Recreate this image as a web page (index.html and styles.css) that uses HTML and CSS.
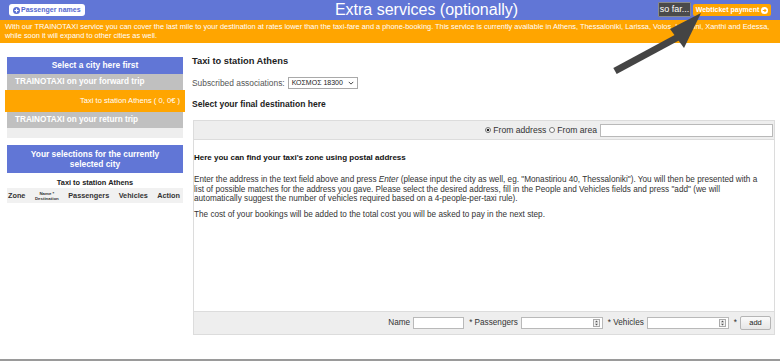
FILE: index.html
```html
<!DOCTYPE html>
<html lang="en">
<head>
<meta charset="utf-8">
<title>Extra services</title>
<link rel="stylesheet" href="styles.css">
</head>
<body>
<header class="topbar">
  <button class="btn-passengers" type="button">
    <svg class="ico" viewBox="0 0 10 10"><circle cx="5" cy="5" r="5" fill="#5a6fd2"/><path d="M5 2.2v5.6M2.2 5h5.6" stroke="#fff" stroke-width="1.7"/></svg>
    Passenger names
  </button>
  <h1 class="title">Extra services (optionally)</h1>
  <div class="top-actions">
    <span class="sofar">so far...</span>
    <button class="btn-pay" type="button">Webticket payment
      <svg class="ico" viewBox="0 0 10 10"><circle cx="5" cy="5" r="5" fill="#fff"/><path d="M2.5 5h4M5 3l2 2-2 2" stroke="#ffa500" stroke-width="1.5" fill="none"/></svg>
    </button>
  </div>
</header>

<p class="banner">With our TRAINOTAXI service you can cover the last mile to your destination at rates lower than the taxi-fare and a phone-booking. This service is currently available in Athens, Thessaloniki, Larissa, Volos, Ioannini, Xanthi and Edessa, while soon it will expand to other cities as well.</p>

<div class="layout">
  <aside class="side">
    <div class="side-head">Select a city here first</div>
    <div class="side-row">TRAINOTAXI on your forward trip</div>
    <div class="side-item">Taxi to station Athens ( 0, 0€ )</div>
    <div class="side-row">TRAINOTAXI on your return trip</div>
    <div class="side-spacer"></div>
    <div class="side-head selections">Your selections for the currently selected city</div>
    <div class="sel-title">Taxi to station Athens</div>
    <div class="sel-cols">
      <span>Zone</span>
      <span class="tiny">Name *<br>Destination</span>
      <span>Passengers</span>
      <span>Vehicles</span>
      <span>Action</span>
    </div>
  </aside>

  <section class="content">
    <h2 class="c-title">Taxi to station Athens</h2>
    <div class="assoc">Subscribed associations:
      <span class="select">ΚΟΣΜΟΣ 18300<svg class="chev" viewBox="0 0 8 5"><path d="M1 1l3 3 3-3" stroke="#333" stroke-width="1.2" fill="none"/></svg></span>
    </div>
    <h3 class="c-sub">Select your final destination here</h3>

    <div class="panel">
      <div class="panel-top">
        <label class="radio"><input type="radio" name="mode" checked>From address</label>
        <label class="radio"><input type="radio" name="mode">From area</label>
        <input class="txt search" type="text">
      </div>
      <div class="panel-body">
        <h4 class="p-head">Here you can find your taxi's zone using postal address</h4>
        <p>Enter the address in the text field above and press <em>Enter</em> (please input the city as well, eg. "Monastiriou 40, Thessaloniki"). You will then be presented with a list of possible matches for the address you gave. Please select the desired address, fill in the People and Vehicles fields and press "add" (we will automatically suggest the number of vehicles required based on a 4-people-per-taxi rule).</p>
        <p>The cost of your bookings will be added to the total cost you will be asked to pay in the next step.</p>
      </div>
      <div class="panel-bottom">
        <span class="lbl">Name</span>
        <input class="txt name" type="text">
        <span class="lbl">* Passengers</span>
        <span class="numbox"><input type="text"><svg class="spin" viewBox="0 0 7 8"><rect x="0.5" y="0.5" width="6" height="7" fill="#f2f2f2" stroke="#aaa"/><path d="M2 3.3h3L3.5 1.6zM2 4.7h3L3.5 6.4z" fill="#555"/></svg></span>
        <span class="lbl">* Vehicles</span>
        <span class="numbox"><input type="text"><svg class="spin" viewBox="0 0 7 8"><rect x="0.5" y="0.5" width="6" height="7" fill="#f2f2f2" stroke="#aaa"/><path d="M2 3.3h3L3.5 1.6zM2 4.7h3L3.5 6.4z" fill="#555"/></svg></span>
        <span class="lbl">*</span>
        <button class="btn-add" type="button">add</button>
      </div>
    </div>
  </section>
</div>

<footer class="foot"></footer>

<svg class="arrow" viewBox="606 8 100 70">
  <line x1="615" y1="71" x2="680" y2="36" stroke="#444" stroke-width="7"/>
  <polygon points="701,13 670,29 684,48" fill="#444"/>
</svg>
</body>
</html>
```

FILE: styles.css
```css
* { box-sizing: border-box; }

body {
  margin: 0;
  width: 780px;
  height: 361px;
  overflow: hidden;
  position: relative;
  background: #fff;
  color: #333;
  font-family: "Liberation Sans", Arial, sans-serif;
}

/* top bar */
.topbar {
  display: flex;
  align-items: center;
  height: 20px;
  padding: 0 9px;
  background: #6176d6;
}
.btn-passengers {
  display: flex;
  align-items: center;
  gap: 1px;
  width: 76px;
  height: 12px;
  padding: 0 0 0 4px;
  border: 0;
  border-radius: 3px;
  background: #fff;
  color: #5468cf;
  font: bold 7px/12px "Liberation Sans", Arial, sans-serif;
  white-space: nowrap;
}
.ico { width: 7px; height: 7px; flex: none; }
.title {
  flex: 1;
  margin: 0;
  padding-left: 110px;
  text-align: center;
  color: #fff;
  font: normal 16px/20px "Liberation Sans", Arial, sans-serif;
}
.top-actions {
  display: flex;
  align-items: center;
  gap: 2px;
}
.sofar {
  width: 33px;
  height: 15px;
  margin-top: -1px;
  border: 1px solid #8a8a8a;
  border-radius: 1px;
  background: #4a4a4a;
  color: #fff;
  font: 9px/13px "Liberation Sans", Arial, sans-serif;
  text-align: center;
}
.btn-pay {
  display: flex;
  align-items: center;
  justify-content: center;
  gap: 2px;
  width: 78px;
  height: 12px;
  padding: 0;
  border: 0;
  border-radius: 2px;
  background: #ffa500;
  color: #fff;
  font: bold 7px/12px "Liberation Sans", Arial, sans-serif;
  white-space: nowrap;
}

/* banner */
.banner {
  margin: 0;
  height: 23px;
  padding: 2px 4px 0 5px;
  background: #ffa500;
  color: #fff;
  font: 7.4px/9px "Liberation Sans", Arial, sans-serif;
}

/* layout */
.layout {
  display: flex;
  align-items: flex-start;
  gap: 9px;
  padding: 14px 0 0 7px;
}
.side { width: 176px; flex: none; }
.content { width: 583px; flex: none; }

/* side column */
.side-head {
  height: 17px;
  background: #6176d6;
  color: #fff;
  text-align: center;
  font: bold 8.4px/17px "Liberation Sans", Arial, sans-serif;
}
.side-row {
  height: 16px;
  padding-left: 8px;
  background: #c0c0c0;
  color: #fff;
  font: bold 8.2px/16px "Liberation Sans", Arial, sans-serif;
}
.side-item {
  height: 22px;
  margin: 0 -2px;
  padding-right: 5px;
  background: #ffa500;
  color: #fff;
  text-align: right;
  font: 7.6px/22px "Liberation Sans", Arial, sans-serif;
}
.side-spacer { height: 10px; background: #eeeeee; }
.side-head.selections {
  height: 28px;
  margin-top: 7px;
  padding: 4px 10px 0;
  line-height: 10px;
}
.sel-title {
  margin-top: 5px;
  color: #222;
  text-align: center;
  font: bold 7.4px/10px "Liberation Sans", Arial, sans-serif;
}
.sel-cols {
  display: flex;
  align-items: center;
  justify-content: space-between;
  height: 15px;
  padding: 0 3px 0 1px;
  background: #f1f1f1;
  color: #333;
  font: bold 7.3px/9px "Liberation Sans", Arial, sans-serif;
}
.sel-cols .tiny {
  font-size: 4.4px;
  line-height: 5px;
  text-align: center;
}

/* content */
.c-title {
  margin: -2px 0 0;
  color: #222;
  font: bold 9.3px/12px "Liberation Sans", Arial, sans-serif;
}
.assoc {
  display: flex;
  align-items: center;
  gap: 3px;
  height: 12px;
  margin-top: 10px;
  color: #555;
  font: 8.4px/12px "Liberation Sans", Arial, sans-serif;
}
.select {
  display: flex;
  align-items: center;
  justify-content: space-between;
  width: 70px;
  height: 12px;
  padding: 0 3px;
  border: 1px solid #a9a9a9;
  background: #fff;
  color: #222;
  font: 7px/10px "Liberation Sans", Arial, sans-serif;
}
.chev { width: 6px; height: 4px; }
.c-sub {
  margin: 10px 0 0;
  color: #222;
  font: bold 8.5px/10px "Liberation Sans", Arial, sans-serif;
}

/* panel */
.panel {
  width: 582px;
  margin: 11px 0 0 1px;
  border: 1px solid #dcdcdc;
}
.panel-top {
  display: flex;
  align-items: center;
  justify-content: flex-end;
  gap: 3px;
  height: 19px;
  padding-right: 1px;
  background: #eeeeee;
  border-bottom: 1px solid #dcdcdc;
  font: 8.6px/12px "Liberation Sans", Arial, sans-serif;
  color: #333;
}
.radio { display: flex; align-items: center; gap: 2px; }
.radio input {
  appearance: none;
  width: 6px;
  height: 6px;
  margin: 0;
  border: 1px solid #777;
  border-radius: 50%;
  background: #fff;
}
.radio input:checked {
  background: radial-gradient(circle, #222 0 1.4px, #fff 1.6px);
}
.txt {
  height: 13px;
  border: 1px solid #b9b9b9;
  background: #fff;
  padding: 0;
}
.search { width: 173px; }

.panel-body {
  height: 171px;
  padding: 13px 6px 0 0;
  color: #333;
  font: 8.2px/9.7px "Liberation Sans", Arial, sans-serif;
}
.p-head {
  margin: 0 0 12px;
  color: #111;
  font: bold 8px/10px "Liberation Sans", Arial, sans-serif;
}
.panel-body p { margin: 0 0 6px; }

.panel-bottom {
  display: flex;
  align-items: center;
  justify-content: flex-end;
  height: 23px;
  padding-right: 3px;
  background: #eeeeee;
  border-top: 1px solid #dcdcdc;
  color: #333;
  font: 8.2px/12px "Liberation Sans", Arial, sans-serif;
}
.lbl { margin: 0 3px 0 5px; }
.name { width: 51px; height: 12px; }
.numbox {
  display: flex;
  align-items: center;
  width: 82px;
  height: 12px;
  padding-right: 2px;
  border: 1px solid #b9b9b9;
  background: #fff;
}
.numbox input { flex: 1; min-width: 0; height: 10px; border: 0; padding: 0; }
.spin { width: 7px; height: 8px; flex: none; }
.btn-add {
  width: 31px;
  height: 14px;
  padding: 0;
  border: 1px solid #b5b5b5;
  border-radius: 2px;
  background: linear-gradient(#fafafa, #e6e6e6);
  color: #222;
  font: 7.5px/12px "Liberation Sans", Arial, sans-serif;
}

.foot {
  margin-top: 24px;
  height: 2px;
  background: #9a9a9a;
}

/* annotation arrow drawn over the page */
.arrow {
  position: absolute;
  left: 606px;
  top: 8px;
  width: 100px;
  height: 70px;
}
```
